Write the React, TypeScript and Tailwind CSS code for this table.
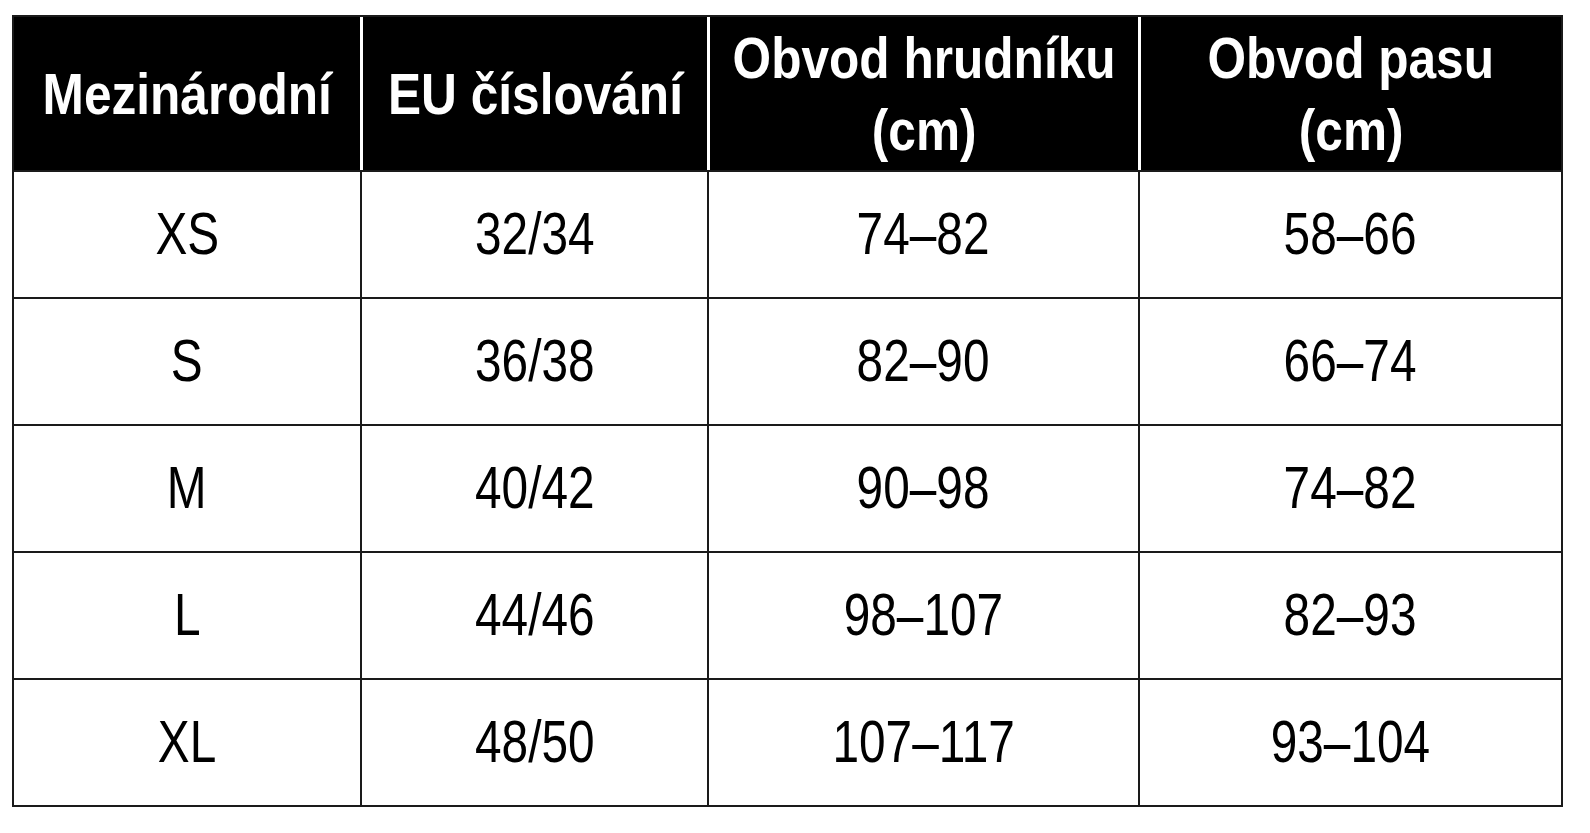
const HEADERS = [
  ["Mezinárodní"],
  ["EU číslování"],
  ["Obvod hrudníku", "(cm)"],
  ["Obvod pasu", "(cm)"],
];

const ROWS = [
  ["XS", "32/34", "74–82", "58–66"],
  ["S", "36/38", "82–90", "66–74"],
  ["M", "40/42", "90–98", "74–82"],
  ["L", "44/46", "98–107", "82–93"],
  ["XL", "48/50", "107–117", "93–104"],
];

export default function App() {
  return (
    <div className="min-h-screen bg-white pt-[15px] pl-[12px] font-['Liberation_Sans',Arial,sans-serif]">
      <div className="w-[1551px] border-2 border-[#1a1a1a]">
        <div className="grid grid-cols-[346px_347px_431px_423px] h-[153px] bg-black">
          {HEADERS.map((lines, i) => (
            <div
              key={i}
              className={
                "flex flex-col items-center justify-center text-white font-bold text-[57px] leading-[72px] whitespace-nowrap " +
                (i > 0 ? "border-l-[3px] border-white" : "")
              }
            >
              {lines.map((l) => (
                <span key={l} className="inline-block scale-x-[0.87]">
                  {l}
                </span>
              ))}
            </div>
          ))}
        </div>
        {ROWS.map((row, r) => (
          <div key={r} className="grid grid-cols-[346px_347px_431px_423px] h-[127px]">
            {row.map((cell, c) => (
              <div
                key={c}
                className={
                  "flex items-center justify-center text-[59px] text-black border-t-2 border-[#1a1a1a] whitespace-nowrap " +
                  (c > 0 ? "border-l-2" : "")
                }
              >
                <span className="inline-block scale-x-[0.81]">{cell}</span>
              </div>
            ))}
          </div>
        ))}
      </div>
    </div>
  );
}
